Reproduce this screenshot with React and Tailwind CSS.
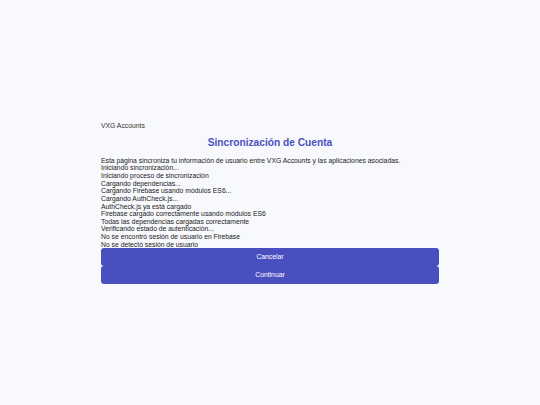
export default function App() {
  const logs = [
    "Iniciando sincronización...",
    "Iniciando proceso de sincronización",
    "Cargando dependencias...",
    "Cargando Firebase usando módulos ES6...",
    "Cargando AuthCheck.js...",
    "AuthCheck.js ya está cargado",
    "Firebase cargado correctamente usando módulos ES6",
    "Todas las dependencias cargadas correctamente",
    "Verificando estado de autenticación...",
    "No se encontró sesión de usuario en Firebase",
    "No se detectó sesión de usuario",
  ];

  return (
    <div
      className="min-h-screen bg-[#f8f9fc] flex items-center justify-center"
      style={{ fontFamily: '"Liberation Sans", Arial, sans-serif' }}
    >
      <div className="w-[338px] flex flex-col">
        <p className="text-[6.8px] leading-[9px] text-[#333]">VXG Accounts</p>
        <h1 className="mt-[6px] text-center text-[10.2px] leading-[14px] font-bold text-[#4a4fbf]">
          Sincronización de Cuenta
        </h1>
        <div className="mt-[7px] text-[6.8px] leading-[7.65px] text-[#222]">
          <p>
            Esta página sincroniza tu información de usuario entre VXG Accounts y
            las aplicaciones asociadas.
          </p>
          {logs.map((line, i) => (
            <p key={i}>{line}</p>
          ))}
        </div>
        <div className="flex flex-col">
          <button className="h-[18px] w-full rounded-[3px] bg-[#4a4fbf] text-[6.8px] text-white">
            Cancelar
          </button>
          <button className="h-[18px] w-full rounded-[3px] bg-[#4a4fbf] text-[6.8px] text-white">
            Continuar
          </button>
        </div>
      </div>
    </div>
  );
}
